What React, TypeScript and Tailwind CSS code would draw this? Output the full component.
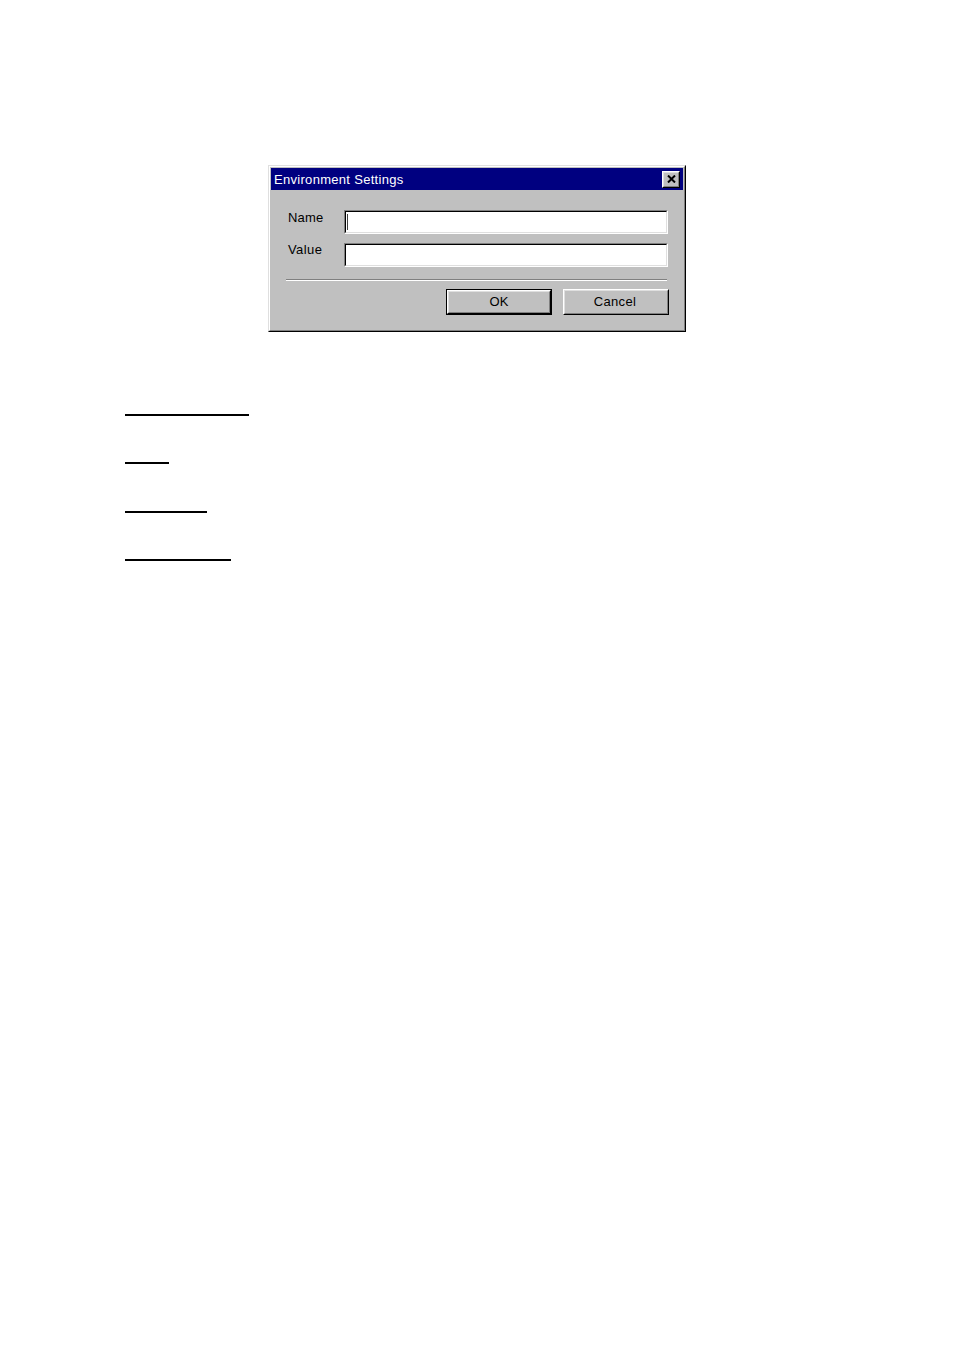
import React from "react";

function Bevel({ children, className = "" }: { children: React.ReactNode; className?: string }) {
  return (
    <div className={"border border-t-white border-l-white border-b-black border-r-black " + className}>
      <div className="h-full w-full border border-t-[#dfdfdf] border-l-[#dfdfdf] border-b-[#808080] border-r-[#808080] bg-[#c0c0c0]">
        {children}
      </div>
    </div>
  );
}

function Field({ cursor }: { cursor?: boolean }) {
  return (
    <div className="h-[24px] flex-1 border border-t-[#808080] border-l-[#808080] border-b-white border-r-white">
      <div className="relative h-full w-full border border-t-black border-l-black border-b-[#dfdfdf] border-r-[#dfdfdf] bg-white">
        {cursor && <div className="absolute left-[1px] top-[2px] h-[16px] w-[1px] bg-[#404040]" />}
      </div>
    </div>
  );
}

export default function App() {
  return (
    <div className="min-h-[1350px] bg-white" style={{ fontFamily: '"Liberation Sans", Arial, sans-serif' }}>
      <div className="pt-[165px] pl-[268px]">
        <div className="w-[418px] h-[167px] border border-t-[#dfdfdf] border-l-[#dfdfdf] border-b-black border-r-black">
          <div className="h-full w-full border border-t-white border-l-white border-b-[#808080] border-r-[#808080] bg-[#c0c0c0] p-[1px]">
            <div className="flex h-[22px] items-center justify-between bg-[#000080] pl-[3px] pr-[3px]">
              <span className="text-[13px] leading-none tracking-[0.3px] text-white">Environment Settings</span>
              <Bevel className="h-[17px] w-[18px]">
                <div className="flex h-full w-full items-center justify-center">
                  <svg width="9" height="8" viewBox="0 0 9 8">
                    <path d="M1 0.5 L8 7.5 M8 0.5 L1 7.5" stroke="black" strokeWidth="2" />
                  </svg>
                </div>
              </Bevel>
            </div>
            <div className="pt-[20px] pl-[17px] pr-[15px]">
              <div className="flex items-start">
                <span className="w-[56px] text-[13px] leading-[16px] tracking-[0.2px] text-black">Name</span>
                <Field cursor />
              </div>
              <div className="mt-[9px] flex items-start">
                <span className="w-[56px] -mt-[1px] text-[13px] leading-[16px] tracking-[0.4px] text-black">Value</span>
                <Field />
              </div>
            </div>
            <div className="mt-[12px] ml-[15px] mr-[16px] border-t border-t-[#808080] border-b border-b-white" />
            <div className="mt-[8px] flex justify-end gap-[11px] pr-[14px]">
              <div className="h-[26px] w-[106px] border border-black">
                <Bevel className="h-full w-full">
                  <div className="flex h-full items-center justify-center text-[13px] text-black">OK</div>
                </Bevel>
              </div>
              <Bevel className="h-[26px] w-[106px]">
                <div className="flex h-full items-center justify-center pr-[2px] text-[13px] tracking-[0.3px] text-black">Cancel</div>
              </Bevel>
            </div>
          </div>
        </div>
      </div>
      <div className="pl-[125px] pt-[82px]">
        <div className="h-[2px] w-[124px] bg-black" />
        <div className="mt-[46px] h-[2px] w-[44px] bg-black" />
        <div className="mt-[47px] h-[2px] w-[82px] bg-black" />
        <div className="mt-[46px] h-[2px] w-[106px] bg-black" />
      </div>
    </div>
  );
}
